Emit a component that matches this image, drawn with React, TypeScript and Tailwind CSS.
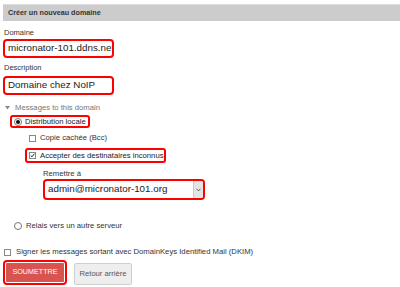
import React from "react";

const font = { fontFamily: '"Liberation Sans", Arial, sans-serif' };

const Radio = ({ checked }: { checked?: boolean }) => (
  <span className="inline-flex w-[8px] h-[8px] rounded-full border border-[#777] bg-white items-center justify-center shrink-0">
    {checked && <span className="w-[4px] h-[4px] rounded-full bg-[#111]" />}
  </span>
);

const Check = ({ checked }: { checked?: boolean }) => (
  <span className="inline-flex w-[7px] h-[7px] border border-[#888] bg-white items-center justify-center shrink-0">
    {checked && (
      <svg width="7" height="7" viewBox="0 0 7 7">
        <path d="M1 3.5 L2.8 5.3 L6.2 1" fill="none" stroke="#111" strokeWidth="1.3" />
      </svg>
    )}
  </span>
);

// champ texte encadré de rouge
const Field = ({ value }: { value: string }) => (
  <div className="w-[111px] h-[19px] border-[2.5px] border-[#f00] rounded-[4px] overflow-hidden bg-white flex items-center pl-[3px] whitespace-nowrap text-[9.8px] text-[#222]">
    {value}
  </div>
);

export default function App() {
  return (
    <div className="w-[400px] h-[287px] bg-white overflow-hidden text-[#333]" style={font}>
      <div className="pl-[3px] pt-[4px]">
        {/* En-tête */}
        <div className="h-[17px] bg-[#cccccc] border-t border-[#dcdcdc] flex items-center pl-[5px] text-[7.2px] font-bold text-[#333]">
          Créer un nouveau domaine
        </div>

        {/* Domaine */}
        <div className="mt-[7px] pl-[1px] text-[7.5px] leading-[9px]">Domaine</div>
        <div className="mt-[2px]">
          <Field value="micronator-101.ddns.net" />
        </div>

        {/* Description */}
        <div className="mt-[5px] pl-[1px] text-[7.5px] leading-[9px]">Description</div>
        <div className="mt-[4px]">
          <Field value="Domaine chez NoIP" />
        </div>

        {/* Messages */}
        <div className="mt-[8px] flex items-center h-[9px] text-[7.7px] text-[#777]">
          <svg width="5" height="4" viewBox="0 0 5 4" className="ml-[2px] mr-[5px]">
            <path d="M0 0 H5 L2.5 3.5 Z" fill="#888" />
          </svg>
          Messages to this domain
        </div>

        <div className="mt-[3px] ml-[7px] w-[80px] h-[13px] border-[2.5px] border-[#f00] rounded-[3px] flex items-center pl-[2px] gap-[3px] text-[7.7px] text-[#222]">
          <Radio checked />
          Distribution locale
        </div>

        <div className="mt-[5px] ml-[26px] h-[10px] flex items-center gap-[4px] text-[7.7px]">
          <Check />
          Copie cachée (Bcc)
        </div>

        <div className="mt-[5px] ml-[22px] w-[141px] h-[15px] border-[2.5px] border-[#f00] rounded-[3px] flex items-center pl-[2px] gap-[4px] text-[7.7px] text-[#222] whitespace-nowrap">
          <Check checked />
          Accepter des destinataires inconnus
        </div>

        <div className="mt-[6px] ml-[40px] h-[9px] leading-[9px] text-[7.7px]">Remettre à</div>
        <div className="mt-[1px] ml-[40px] w-[162px] h-[21px] border-[2.5px] border-[#f00] rounded-[4px] flex items-stretch overflow-hidden bg-white">
          <div className="flex-1 flex items-center pl-[3px] text-[9.8px] text-[#222] whitespace-nowrap">admin@micronator-101.org</div>
          <div className="w-[10px] bg-[#e4e4e4] border-l border-[#c8c8c8] flex items-center justify-center">
            <svg width="5" height="4" viewBox="0 0 5 4">
              <path d="M0.5 0.8 L2.5 2.8 L4.5 0.8" fill="none" stroke="#555" strokeWidth="1" />
            </svg>
          </div>
        </div>

        <div className="mt-[21px] ml-[11px] h-[10px] flex items-center gap-[4px] text-[7.7px]">
          <Radio />
          Relais vers un autre serveur
        </div>

        <div className="mt-[16px] ml-[1px] h-[10px] flex items-center gap-[5px] text-[7.7px] whitespace-nowrap">
          <Check />
          Signer les messages sortant avec DomainKeys Identified Mail (DKIM)
        </div>

        <div className="mt-[3px] flex items-start gap-[7px]">
          <div className="w-[64px] h-[25px] border-[2.5px] border-[#f00] rounded-[4px] p-[1px]">
            <div className="w-full h-full bg-[#d9534f] rounded-[1px] flex items-center justify-center text-white text-[7.2px]">
              SOUMETTRE
            </div>
          </div>
          <div className="mt-[3px] w-[58px] h-[22px] bg-[#eeeeee] border border-[#cfcfcf] rounded-[2px] flex items-center justify-center text-[7.6px] text-[#555]">
            Retour arrière
          </div>
        </div>
      </div>
    </div>
  );
}
